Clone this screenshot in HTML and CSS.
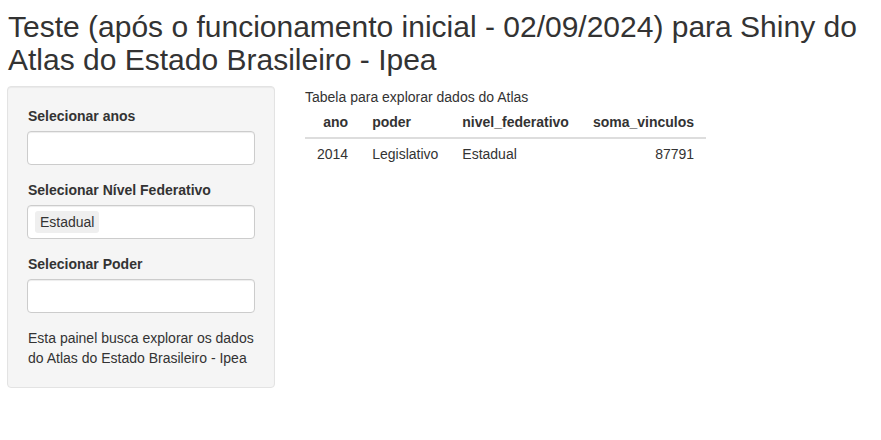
FILE: index.html
```html
<!DOCTYPE html>
<html lang="pt">
<head>
<meta charset="utf-8">
<title>Atlas</title>
<link rel="stylesheet" href="styles.css">
</head>
<body>
<div class="page">
  <h2 class="title">Teste (após o funcionamento inicial - 02/09/2024) para Shiny do Atlas do Estado Brasileiro - Ipea</h2>
  <div class="row">
    <div class="well">
      <div class="form-group">
        <label class="lbl">Selecionar anos</label>
        <div class="sel-input"></div>
      </div>
      <div class="form-group">
        <label class="lbl">Selecionar Nível Federativo</label>
        <div class="sel-input"><span class="chip">Estadual</span></div>
      </div>
      <div class="form-group">
        <label class="lbl">Selecionar Poder</label>
        <div class="sel-input"></div>
      </div>
      <div class="help">Esta painel busca explorar os dados do Atlas do Estado Brasileiro - Ipea</div>
    </div>
    <div class="main">
      <div class="caption">Tabela para explorar dados do Atlas</div>
      <table class="tbl">
        <thead>
          <tr><th class="num">ano</th><th>poder</th><th>nivel_federativo</th><th class="num">soma_vinculos</th></tr>
        </thead>
        <tbody>
          <tr><td class="num">2014</td><td>Legislativo</td><td>Estadual</td><td class="num">87791</td></tr>
        </tbody>
      </table>
    </div>
  </div>
</div>
</body>
</html>
```
FILE: styles.css
```css
html, body {
  margin: 0;
  padding: 0;
  background: #fff;
}
body {
  font-family: "Liberation Sans", Arial, sans-serif;
  font-size: 14px;
  line-height: 20px;
  color: #333;
}
.page {
  padding: 0 7px;
}
.title {
  font-size: 30px;
  line-height: 33px;
  font-weight: 500;
  margin: 10px 0 10px 1px;
  color: #333;
}
.row {
  display: flex;
  align-items: flex-start;
}
.well {
  width: 268px;
  box-sizing: border-box;
  background: #f5f5f5;
  border: 1px solid #e3e3e3;
  border-radius: 4px;
  padding: 19px 19px 19px 19px;
  box-shadow: inset 0 1px 1px rgba(0,0,0,0.05);
}
.form-group {
  margin-bottom: 15px;
}
.lbl {
  display: block;
  font-weight: bold;
  margin-bottom: 5px;
  padding-left: 1px;
}
.sel-input {
  box-sizing: border-box;
  height: 34px;
  background: #fff;
  border: 1px solid #ccc;
  border-radius: 4px;
  box-shadow: inset 0 1px 1px rgba(0,0,0,0.075);
  padding: 5px 7px;
  display: flex;
  align-items: center;
}
.chip {
  background: #efefef;
  border-radius: 3px;
  padding: 1px 5px;
  line-height: 20px;
}
.help {
  padding-left: 1px;
}
.main {
  margin-left: 30px;
  padding-top: 1px;
}
.caption {
  line-height: 20px;
}
.tbl {
  border-collapse: collapse;
  border-spacing: 0;
}
.tbl th, .tbl td {
  padding: 5px 12px;
  line-height: 20px;
  text-align: left;
}
.tbl th {
  font-weight: bold;
  border-bottom: 2px solid #ddd;
}
.tbl .num {
  text-align: right;
}
```
